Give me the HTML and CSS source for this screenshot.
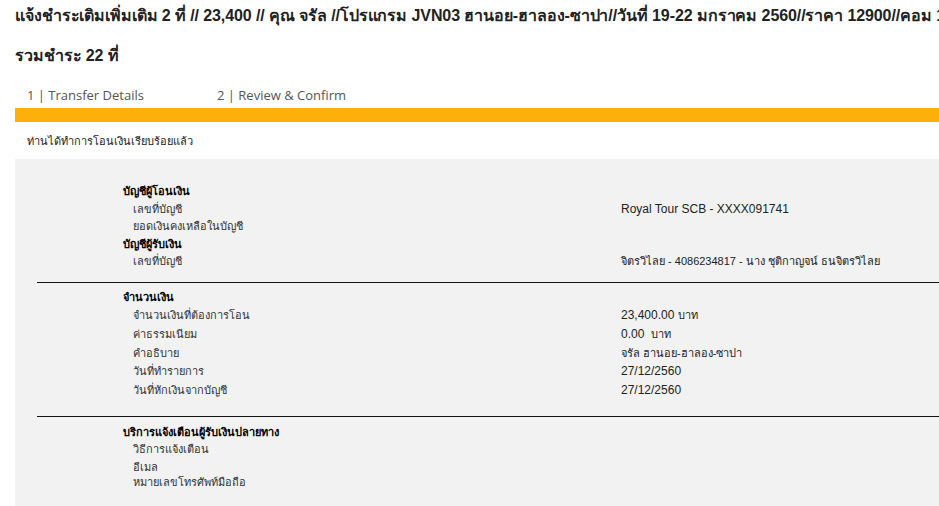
FILE: index.html
```html
<!DOCTYPE html>
<html lang="th">
<head>
<meta charset="utf-8">
<title>Transfer</title>
<link rel="stylesheet" href="styles.css">
</head>
<body>
<div class="page">
  <h1 class="title">แจ้งชำระเติมเพิ่มเติม 2 ที่ // 23,400 // คุณ จรัล //โปรแกรม JVN03 ฮานอย-ฮาลอง-ซาปา//วันที่ 19-22 มกราคม 2560//ราคา 12900//คอม 1000</h1>
  <h2 class="title title-sub">รวมชำระ 22 ที่</h2>
  <div class="tabs">
    <span class="tab">1 | Transfer Details</span>
    <span class="tab">2 | Review &amp; Confirm</span>
  </div>
  <div class="bar"></div>
  <p class="message">ท่านได้ทำการโอนเงินเรียบร้อยแล้ว</p>
  <div class="panel">
    <section class="section first">
      <div class="grid">
        <div class="head">บัญชีผู้โอนเงิน</div><div></div>
        <div class="label">เลขที่บัญชี</div><div class="value">Royal Tour SCB - XXXX091741</div>
        <div class="label">ยอดเงินคงเหลือในบัญชี</div><div class="value"></div>
        <div class="head">บัญชีผู้รับเงิน</div><div></div>
        <div class="label">เลขที่บัญชี</div><div class="value thai">จิตรวิไลย - 4086234817 - นาง ชุติกาญจน์ ธนจิตรวิไลย</div>
      </div>
    </section>
    <hr class="divider">
    <section class="section middle">
      <div class="grid loose">
        <div class="head">จำนวนเงิน</div><div></div>
        <div class="label">จำนวนเงินที่ต้องการโอน</div><div class="value">23,400.00 <span class="thai">บาท</span></div>
        <div class="label">ค่าธรรมเนียม</div><div class="value">0.00 &nbsp;<span class="thai">บาท</span></div>
        <div class="label">คำอธิบาย</div><div class="value thai">จรัล ฮานอย-ฮาลอง-ซาปา</div>
        <div class="label">วันที่ทำรายการ</div><div class="value">27/12/2560</div>
        <div class="label">วันที่หักเงินจากบัญชี</div><div class="value">27/12/2560</div>
      </div>
    </section>
    <hr class="divider">
    <section class="section last">
      <div class="grid">
        <div class="head">บริการแจ้งเตือนผู้รับเงินปลายทาง</div><div></div>
        <div class="label">วิธีการแจ้งเตือน</div><div class="value"></div>
        <div class="label">อีเมล</div><div class="value"></div>
        <div class="label tight">หมายเลขโทรศัพท์มือถือ</div><div class="value tight"></div>
      </div>
    </section>
  </div>
</div>
</body>
</html>
```
FILE: styles.css
```css
html, body {
  margin: 0;
  padding: 0;
  background: #ffffff;
  overflow: hidden;
}
body {
  font-family: "Liberation Sans", Arial, sans-serif;
  color: #222;
}
.page {
  padding-left: 15px;
  height: 506px;
  display: flex;
  flex-direction: column;
}
.title {
  margin: 0;
  padding-top: 6px;
  font-size: 16px;
  line-height: 20px;
  font-weight: bold;
  color: #222;
  white-space: nowrap;
  letter-spacing: -0.1px;
}
.title-sub {
  padding-top: 20px;
}
.tabs {
  margin-top: 20px;
  display: flex;
  font-family: "Open Sans", "DejaVu Sans", sans-serif;
  font-size: 13px;
  line-height: 18px;
  color: #555;
}
.tab {
  padding-left: 12px;
  width: 178px;
}
.bar {
  margin-top: 4px;
  height: 14px;
  background: #fdb00c;
}
.message {
  margin: 0;
  padding: 11px 0 10px 12px;
  font-size: 11px;
  line-height: 16px;
  color: #222;
}
.panel {
  flex: 1;
  background: #f2f2f2;
}
.section {
  padding-left: 108px;
}
.section.first { padding-top: 24px; padding-bottom: 11px; }
.section.middle { padding-top: 5px; padding-bottom: 16px; }
.section.last { padding-top: 7px; }
.grid {
  display: grid;
  grid-template-columns: 498px 1fr;
  line-height: 17.5px;
}
.grid.loose {
  line-height: 18.7px;
}
.head {
  font-size: 11px;
  font-weight: bold;
  color: #000;
}
.label {
  padding-left: 10px;
  font-size: 11px;
  color: #333;
}
.value {
  font-size: 12px;
  color: #222;
}
.thai {
  font-size: 11px;
}
.tight {
  line-height: 12px;
}
.divider {
  margin: 0 0 0 22px;
  border: 0;
  border-top: 1px solid #111;
  height: 0;
}
```
